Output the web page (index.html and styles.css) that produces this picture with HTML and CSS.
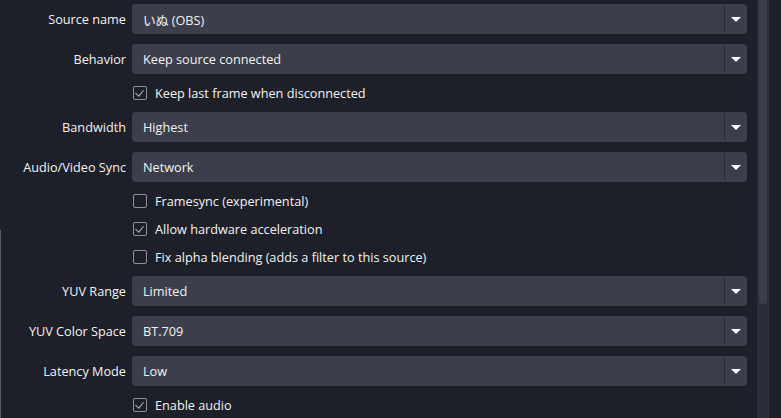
FILE: index.html
```html
<!DOCTYPE html>
<html>
<head>
<meta charset="utf-8">
<link rel="stylesheet" href="styles.css">
</head>
<body>
<div class="window">
  <div class="edge"></div>
  <div class="content">
    <div class="form">
      <div class="label">Source name</div>
      <div class="combo"><span class="value">いぬ (OBS)</span><span class="drop"><span class="arrow"></span></span></div>

      <div class="label">Behavior</div>
      <div class="combo"><span class="value">Keep source connected</span><span class="drop"><span class="arrow"></span></span></div>

      <div class="check-row"><span class="box checked"></span><span>Keep last frame when disconnected</span></div>

      <div class="label">Bandwidth</div>
      <div class="combo"><span class="value">Highest</span><span class="drop"><span class="arrow"></span></span></div>

      <div class="label">Audio/Video Sync</div>
      <div class="combo"><span class="value">Network</span><span class="drop"><span class="arrow"></span></span></div>

      <div class="check-row"><span class="box"></span><span>Framesync (experimental)</span></div>
      <div class="check-row"><span class="box checked"></span><span>Allow hardware acceleration</span></div>
      <div class="check-row"><span class="box"></span><span>Fix alpha blending (adds a filter to this source)</span></div>

      <div class="label">YUV Range</div>
      <div class="combo"><span class="value">Limited</span><span class="drop"><span class="arrow"></span></span></div>

      <div class="label">YUV Color Space</div>
      <div class="combo"><span class="value">BT.709</span><span class="drop"><span class="arrow"></span></span></div>

      <div class="label">Latency Mode</div>
      <div class="combo"><span class="value">Low</span><span class="drop"><span class="arrow"></span></span></div>

      <div class="check-row"><span class="box checked"></span><span>Enable audio</span></div>
    </div>
  </div>
  <div class="scrollbar"><div class="thumb"></div></div>
  <div class="side"></div>
</div>
</body>
</html>
```
FILE: styles.css
```css
html, body {
  margin: 0;
  padding: 0;
  background: #1e2029;
}
body {
  width: 781px;
  height: 418px;
  overflow: hidden;
  font-family: "Open Sans", "Noto Sans CJK JP", sans-serif;
  font-size: 12.7px;
  color: #f2f2f2;
}
.window {
  display: flex;
  height: 418px;
}
.edge {
  width: 1px;
  background: linear-gradient(to bottom, #1e2029 0, #1e2029 230px, #5a5d66 230px);
}
.content {
  flex: 1;
  padding: 4px 10px 0 0;
}
.form {
  display: grid;
  grid-template-columns: 125px 1fr;
  column-gap: 6px;
  row-gap: 10px;
}
.label {
  height: 30px;
  display: flex;
  align-items: center;
  justify-content: flex-end;
  white-space: nowrap;
}
.combo {
  height: 30px;
  display: flex;
  align-items: center;
  background: #3c3f4b;
  border-radius: 4px;
}
.value {
  flex: 1;
  padding-left: 11px;
  white-space: nowrap;
}
.drop {
  width: 22px;
  height: 28px;
  border-left: 1px solid #2a2c35;
  display: flex;
  align-items: center;
  justify-content: center;
}
.arrow {
  width: 0;
  height: 0;
  border-left: 5px solid transparent;
  border-right: 5px solid transparent;
  border-top: 5px solid #ffffff;
}
.check-row {
  grid-column: 2;
  height: 18px;
  display: flex;
  align-items: center;
  gap: 8px;
  padding-left: 1px;
}
.box {
  width: 12px;
  height: 12px;
  border: 1px solid #8e9098;
  border-radius: 2px;
  position: relative;
  flex: none;
}
.box.checked::after {
  content: "";
  position: absolute;
  left: 3px;
  top: 1px;
  width: 4px;
  height: 7px;
  border-right: 1.5px solid #b4b6bb;
  border-bottom: 1.5px solid #b4b6bb;
  transform: rotate(40deg);
}
.scrollbar {
  width: 12px;
  background: #2a2d37;
  display: flex;
  justify-content: center;
}
.thumb {
  width: 8px;
  height: 304px;
  background: #3c3f4b;
  border-radius: 0 0 3px 3px;
}
.side {
  width: 12px;
  background: #1e2029;
}
```
